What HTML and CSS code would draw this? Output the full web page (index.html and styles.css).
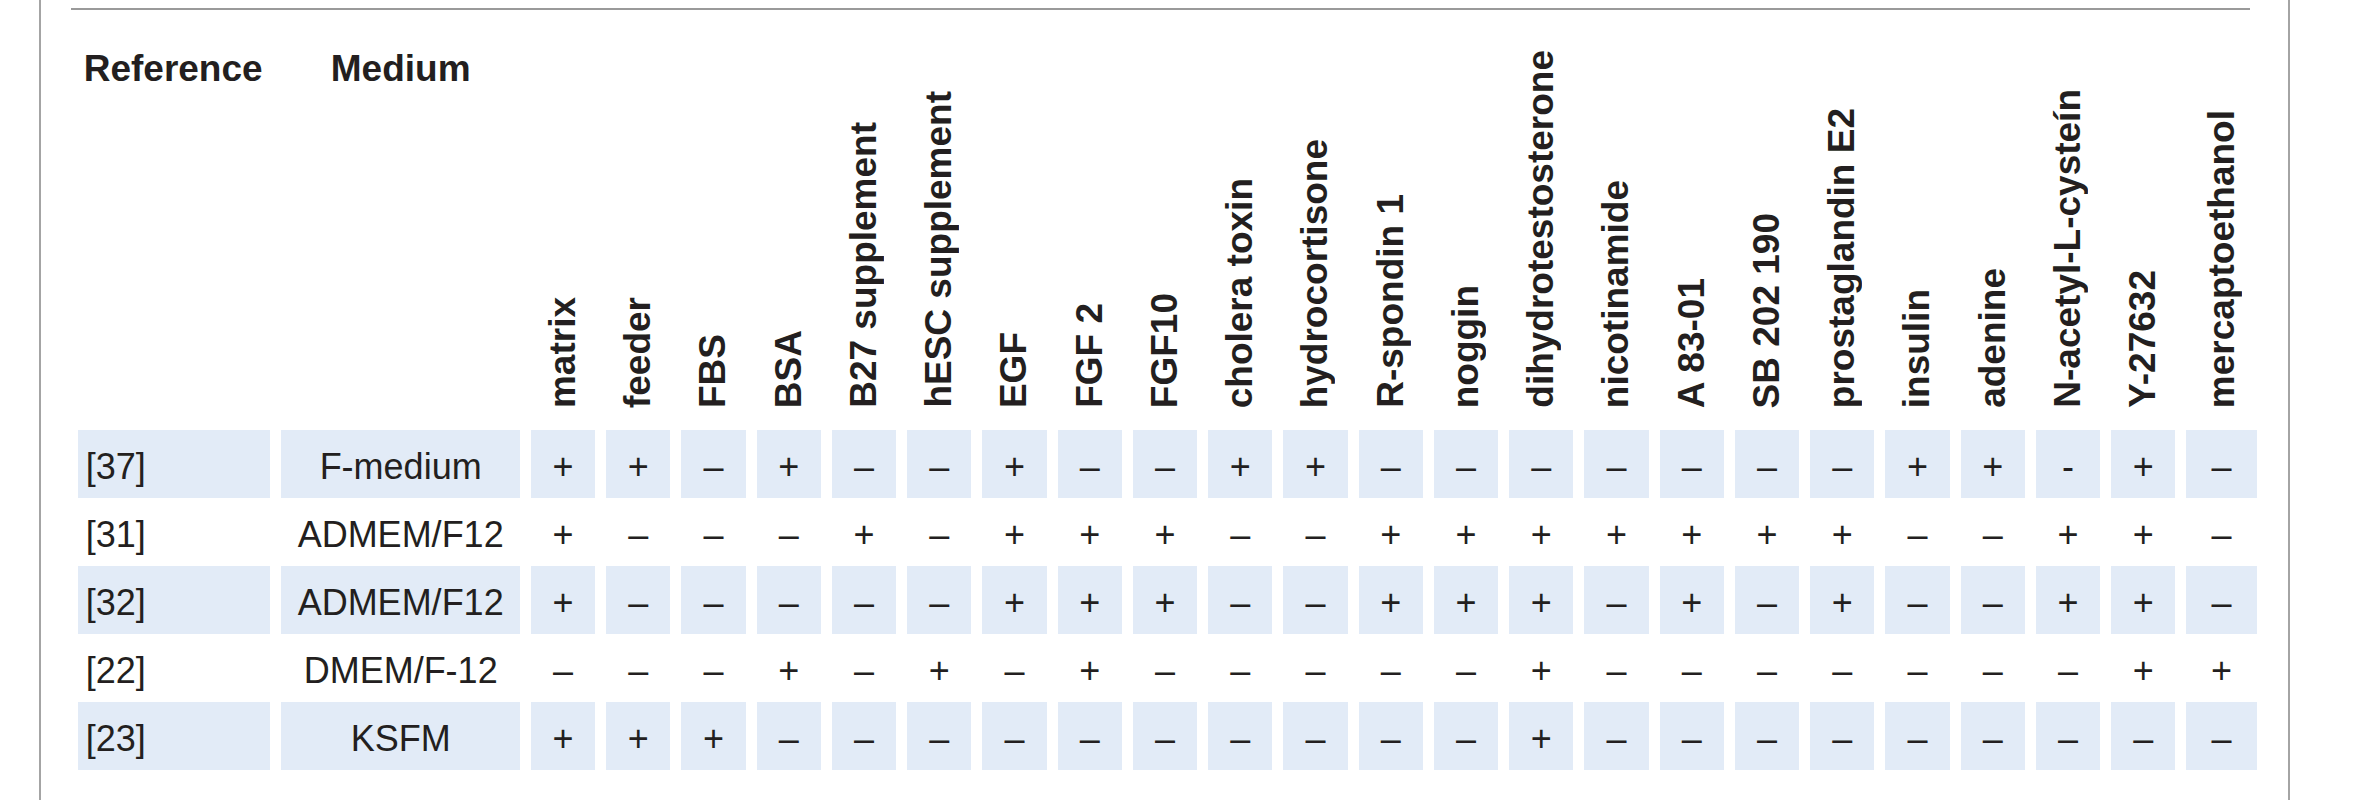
FILE: index.html
```html
<!DOCTYPE html>
<html lang="en">
<head>
<meta charset="utf-8">
<title>Culture media components</title>
<link rel="stylesheet" href="styles.css">
</head>
<body>
<div class="frame">
  <div class="rule"></div>
  <table class="media">
    <colgroup>
      <col class="w-ref"><col class="w-med">
      <col class="w-d"><col class="w-d"><col class="w-d"><col class="w-d"><col class="w-d"><col class="w-d"><col class="w-d"><col class="w-d"><col class="w-d"><col class="w-d"><col class="w-d">
      <col class="w-d"><col class="w-d"><col class="w-d"><col class="w-d"><col class="w-d"><col class="w-d"><col class="w-d"><col class="w-d"><col class="w-d"><col class="w-d"><col class="w-d">
      <col class="w-last">
    </colgroup>
    <thead>
      <tr class="head">
        <th class="h-ref">Reference</th>
        <th class="h-med">Medium</th>
        <th class="h-rot"><span>matrix</span></th>
        <th class="h-rot"><span>feeder</span></th>
        <th class="h-rot"><span>FBS</span></th>
        <th class="h-rot"><span>BSA</span></th>
        <th class="h-rot"><span>B27 supplement</span></th>
        <th class="h-rot"><span>hESC supplement</span></th>
        <th class="h-rot"><span>EGF</span></th>
        <th class="h-rot"><span>FGF 2</span></th>
        <th class="h-rot"><span>FGF10</span></th>
        <th class="h-rot"><span>cholera toxin</span></th>
        <th class="h-rot"><span>hydrocortisone</span></th>
        <th class="h-rot"><span>R-spondin 1</span></th>
        <th class="h-rot"><span>noggin</span></th>
        <th class="h-rot"><span>dihydrotestosterone</span></th>
        <th class="h-rot"><span>nicotinamide</span></th>
        <th class="h-rot"><span>A 83-01</span></th>
        <th class="h-rot"><span>SB 202 190</span></th>
        <th class="h-rot"><span>prostaglandin E2</span></th>
        <th class="h-rot"><span>insulin</span></th>
        <th class="h-rot"><span>adenine</span></th>
        <th class="h-rot"><span>N-acetyl-L-cysteín</span></th>
        <th class="h-rot"><span>Y-27632</span></th>
        <th class="h-rot"><span>mercaptoethanol</span></th>
      </tr>
    </thead>
    <tbody>
      <tr class="shade">
        <td class="ref">[37]</td><td class="med">F-medium</td>
        <td>+</td><td>+</td><td>–</td><td>+</td><td>–</td><td>–</td><td>+</td><td>–</td><td>–</td><td>+</td><td>+</td>
        <td>–</td><td>–</td><td>–</td><td>–</td><td>–</td><td>–</td><td>–</td><td>+</td><td>+</td><td>-</td><td>+</td><td>–</td>
      </tr>
      <tr>
        <td class="ref">[31]</td><td class="med">ADMEM/F12</td>
        <td>+</td><td>–</td><td>–</td><td>–</td><td>+</td><td>–</td><td>+</td><td>+</td><td>+</td><td>–</td><td>–</td>
        <td>+</td><td>+</td><td>+</td><td>+</td><td>+</td><td>+</td><td>+</td><td>–</td><td>–</td><td>+</td><td>+</td><td>–</td>
      </tr>
      <tr class="shade">
        <td class="ref">[32]</td><td class="med">ADMEM/F12</td>
        <td>+</td><td>–</td><td>–</td><td>–</td><td>–</td><td>–</td><td>+</td><td>+</td><td>+</td><td>–</td><td>–</td>
        <td>+</td><td>+</td><td>+</td><td>–</td><td>+</td><td>–</td><td>+</td><td>–</td><td>–</td><td>+</td><td>+</td><td>–</td>
      </tr>
      <tr>
        <td class="ref">[22]</td><td class="med">DMEM/F-12</td>
        <td>–</td><td>–</td><td>–</td><td>+</td><td>–</td><td>+</td><td>–</td><td>+</td><td>–</td><td>–</td><td>–</td>
        <td>–</td><td>–</td><td>+</td><td>–</td><td>–</td><td>–</td><td>–</td><td>–</td><td>–</td><td>–</td><td>+</td><td>+</td>
      </tr>
      <tr class="shade">
        <td class="ref">[23]</td><td class="med">KSFM</td>
        <td>+</td><td>+</td><td>+</td><td>–</td><td>–</td><td>–</td><td>–</td><td>–</td><td>–</td><td>–</td><td>–</td>
        <td>–</td><td>–</td><td>+</td><td>–</td><td>–</td><td>–</td><td>–</td><td>–</td><td>–</td><td>–</td><td>–</td><td>–</td>
      </tr>
    </tbody>
  </table>
</div>
</body>
</html>
```

FILE: styles.css
```css
html, body {
  margin: 0;
  padding: 0;
  background: #ffffff;
}

body {
  font-family: "Liberation Sans", Arial, sans-serif;
  color: #231f20;
}

.frame {
  box-sizing: border-box;
  margin-left: 39px;
  width: 2251px;
  min-height: 800px;
  border-left: 2px solid #a4a4a4;
  border-right: 2px solid #a4a4a4;
  overflow: hidden;
}

.rule {
  margin-left: 30px;
  margin-top: 8px;
  width: 2179px;
  border-top: 2px solid #9a9a9a;
}

.media {
  border-collapse: separate;
  border-spacing: 11.3px 0;
  table-layout: fixed;
  width: 2201.2px;
  margin-left: 25.7px;
}

.w-ref { width: 192px; }
.w-med { width: 237.4px; }
.w-d { width: 64px; }
.w-last { width: 70px; }

.media tr.head {
  height: 420px;
}

.head th {
  padding: 0;
  font-weight: bold;
  font-size: 37px;
  white-space: nowrap;
}

.head th.h-ref {
  vertical-align: top;
  text-align: left;
  padding-top: 38px;
  padding-left: 6px;
}

.head th.h-med {
  vertical-align: top;
  text-align: center;
  padding-top: 38px;
}

.head th.h-rot {
  vertical-align: bottom;
  padding-bottom: 22px;
}

.h-rot span {
  display: block;
  width: 40px;
  margin: 0 auto;
  writing-mode: vertical-rl;
  transform: rotate(180deg);
  line-height: 40px;
  white-space: nowrap;
}

.media tbody tr {
  height: 68px;
}

.media td {
  padding: 6px 0 0 0;
  font-size: 36px;
  text-align: center;
  vertical-align: middle;
  white-space: nowrap;
  line-height: normal;
}

.media td.ref {
  text-align: left;
  padding-left: 8px;
}

.shade td {
  background: #e2ebf7;
}
```
